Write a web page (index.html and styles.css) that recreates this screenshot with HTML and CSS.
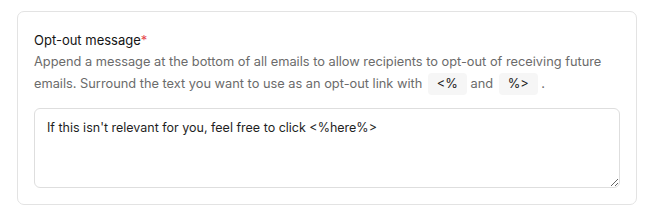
FILE: index.html
```html
<!DOCTYPE html>
<html>
<head>
<meta charset="utf-8">
<link rel="stylesheet" href="styles.css">
</head>
<body>
<div class="page">
  <div class="card">
    <label class="title" for="msg">Opt-out message<span class="req">*</span></label>
    <p class="desc">Append a message at the bottom of all emails to allow recipients to opt-out of receiving future emails. Surround the text you want to use as an opt-out link with <code class="chip">&lt;%</code> and <code class="chip">%&gt;</code> .</p>
    <textarea id="msg" class="input">If this isn't relevant for you, feel free to click &lt;%here%&gt;</textarea>
  </div>
</div>
</body>
</html>
```
FILE: styles.css
```css
html, body {
  margin: 0;
  padding: 0;
  background: #ffffff;
}
.page {
  padding: 11px 19px 0 17px;
  font-family: Inter, "Liberation Sans", sans-serif;
}
.card {
  border: 1px solid #e3e3e3;
  border-radius: 7px;
  padding: 17px 16px 16px 16px;
  display: flex;
  flex-direction: column;
}
.title {
  font-size: 13px;
  line-height: 22px;
  color: #141414;
  font-weight: 400;
}
.req {
  color: #e5484d;
}
.desc {
  margin: 0 0 13px 0;
  font-size: 12.8px;
  line-height: 22px;
  color: #6b6b6b;
}
.chip {
  display: inline-block;
  font-family: Inter, "Liberation Sans", sans-serif;
  font-size: 12.8px;
  line-height: 22px;
  color: #1a1a1a;
  background: #f6f6f6;
  border-radius: 4px;
  padding: 0 9px;
  margin: 0 0 0 2px;
  vertical-align: top;
}
.input {
  box-sizing: border-box;
  height: 80px;
  width: 100%;
  border: 1px solid #dedede;
  border-radius: 6px;
  padding: 9px 12px;
  font-family: Inter, "Liberation Sans", sans-serif;
  font-size: 12.5px;
  line-height: 20px;
  color: #1f1f1f;
  resize: vertical;
  outline: none;
  margin: 0;
}
```
